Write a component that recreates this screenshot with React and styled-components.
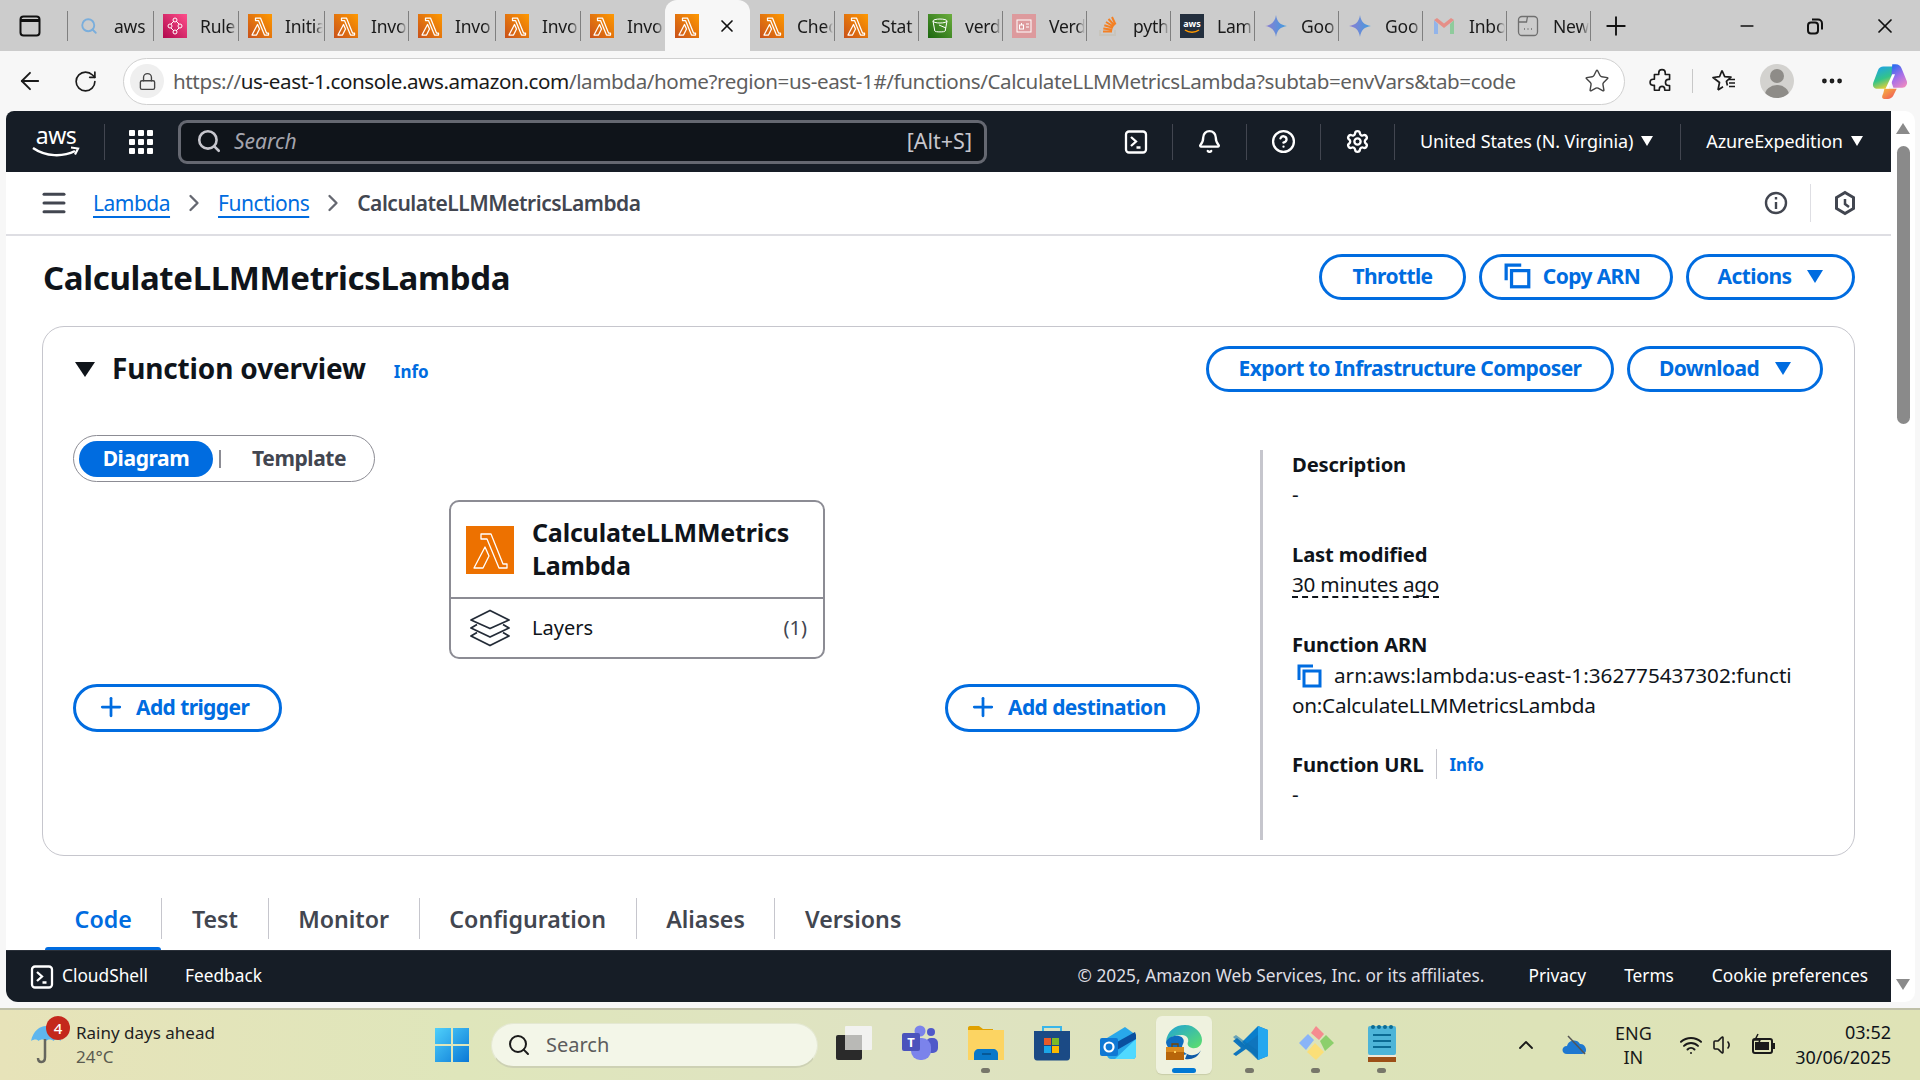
import React from 'react';
import styled, { createGlobalStyle } from 'styled-components';
import { ArrowLeft, RotateCw, Lock, Star, Search, Bell, CircleHelp, Settings, Plus, X, Minus, Menu, ChevronRight, ChevronUp, Wifi, Volume1, Ellipsis } from 'lucide-react';

const GlobalStyle = createGlobalStyle`
    html, body {
        margin: 0;
        padding: 0;
        background: #f7f7f7;
        overflow: hidden;
    }
    * {
        box-sizing: border-box;
    }
    body {
        font-family: "Noto Sans", "Open Sans", sans-serif;
        color: #0f141a;
    }
`;

const Page = styled.div`
    display: flex;
    flex-direction: column;
    width: 1920px;
    height: 1080px;
    overflow: hidden;
`;

/* browser chrome */

const TabStrip = styled.div`
    display: flex;
    align-items: stretch;
    flex: 0 0 51px;
    background: #cccccc;
`;

const WindowButton = styled.div`
    display: flex;
    align-items: center;
    flex: 0 0 67px;
    padding-left: 18px;
`;

const Tab = styled.div`
    position: relative;
    display: flex;
    align-items: center;
    flex: 0 0 ${(p) => p.$width || 84}px;
    min-width: 0;
    padding-left: 10px;
    background: ${(p) => (p.$active ? '#f7f7f7' : 'transparent')};
    border-radius: ${(p) => (p.$active ? '12px 12px 0 0' : '0')};
    &::before {
        content: '';
        display: ${(p) => (p.$active || p.$noLine ? 'none' : 'block')};
        position: absolute;
        left: 0;
        top: 11px;
        bottom: 10px;
        width: 1px;
        background: #7f7f7f;
    }
`;

const FaviconBox = styled.span`
    display: flex;
    flex: 0 0 24px;
    width: 24px;
    height: 24px;
    align-items: center;
    justify-content: center;
`;

const TabLabel = styled.span`
    flex: 1;
    min-width: 0;
    margin: 0 1px 0 13px;
    overflow: hidden;
    white-space: nowrap;
    font-size: 17.5px;
    letter-spacing: -0.2px;
    color: #1a1a1a;
    -webkit-mask-image: linear-gradient(90deg, #000 78%, transparent 100%);
    mask-image: linear-gradient(90deg, #000 78%, transparent 100%);
`;

const TabClose = styled.span`
    display: flex;
    margin-left: 18px;
`;

const NewTab = styled.div`
    display: flex;
    align-items: center;
    margin-left: 0;
    padding-left: 11px;
    position: relative;
    &::before {
        content: '';
        position: absolute;
        left: 0;
        top: 11px;
        bottom: 10px;
        width: 1px;
        background: #7f7f7f;
    }
`;

const WindowControls = styled.div`
    display: flex;
    align-items: center;
    margin-left: auto;
    padding-right: 23px;
    gap: 49px;
`;

const AddressRow = styled.div`
    display: flex;
    align-items: center;
    flex: 0 0 60px;
    padding-left: 16px;
    background: #f7f7f7;
`;

const NavIcon = styled.span`
    display: flex;
    align-items: center;
    justify-content: center;
    flex: 0 0 ${(p) => p.$w || 28}px;
    margin-right: ${(p) => p.$mr || 0}px;
    margin-left: ${(p) => p.$ml || 0}px;
    color: #1b1b1b;
`;

const UrlPill = styled.div`
    display: flex;
    align-items: center;
    flex: 0 0 1502px;
    height: 47px;
    padding-left: 6px;
    background: #ffffff;
    border: 1px solid #d0d0d0;
    border-radius: 24px;
`;

const LockCircle = styled.span`
    display: flex;
    align-items: center;
    justify-content: center;
    flex: 0 0 34px;
    height: 34px;
    border-radius: 50%;
    background: #efefef;
    color: #444;
`;

const UrlText = styled.div`
    flex: 1;
    margin-left: 9px;
    font-size: 20.6px;
    color: #5f5f5f;
    white-space: nowrap;
    letter-spacing: -0.4px;
    & b {
        font-weight: 400;
        color: #1a1a1a;
    }
`;

const ToolSeparator = styled.span`
    width: 1px;
    height: 24px;
    background: #c8c8c8;
    margin: 0 ${(p) => p.$mx || 14}px;
`;

const Avatar = styled.span`
    position: relative;
    display: block;
    width: 34px;
    height: 34px;
    border-radius: 50%;
    background: #d3d2cf;
    overflow: hidden;
    &::before {
        content: '';
        position: absolute;
        left: 10px;
        top: 5px;
        width: 14px;
        height: 14px;
        border-radius: 50%;
        background: #8e8c88;
    }
    &::after {
        content: '';
        position: absolute;
        left: 5px;
        top: 21px;
        width: 24px;
        height: 20px;
        border-radius: 50%;
        background: #8e8c88;
    }
`;

/* console frame */

const Viewport = styled.div`
    flex: 0 0 897px;
    display: flex;
    padding: 0 5px 6px 6px;
    background: #f7f7f7;
`;

const ConsoleFrame = styled.div`
    display: flex;
    flex-direction: column;
    flex: 0 0 1885px;
    background: #ffffff;
    border-radius: 8px 0 0 12px;
    overflow: hidden;
`;

const ScrollTrack = styled.div`
    display: flex;
    flex-direction: column;
    align-items: center;
    flex: 0 0 24px;
    padding: 12px 0 12px;
    background: #ffffff;
    border-radius: 0 10px 10px 0;
`;

const ScrollArrow = styled.span`
    width: 0;
    height: 0;
    border-left: 7px solid transparent;
    border-right: 7px solid transparent;
    border-${(p) => (p.$down ? 'top' : 'bottom')}: 11px solid #8a8a8a;
`;

const ScrollThumb = styled.div`
    width: 13px;
    height: 278px;
    margin-top: 12px;
    margin-bottom: auto;
    background: #8a8a8a;
    border-radius: 7px;
`;

const TopNav = styled.header`
    display: flex;
    align-items: center;
    flex: 0 0 61px;
    padding-left: 26px;
    background: #161d26;
    color: #ffffff;
`;

const NavDivider = styled.span`
    width: 1px;
    height: 36px;
    background: #424650;
    margin-left: 24px;
`;

const ServicesGrid = styled.div`
    display: grid;
    grid-template-columns: repeat(3, 6px);
    grid-auto-rows: 6px;
    gap: 3px;
    margin: 0 25px 0 24px;
    & span {
        background: #ffffff;
        border-radius: 1px;
    }
`;

const SearchBox = styled.div`
    display: flex;
    align-items: center;
    flex: 0 0 809px;
    height: 44px;
    padding: 0 12px 2px 15px;
    background: #0f141a;
    border: 3px solid #656871;
    border-radius: 9px;
    color: #c6c6cd;
`;

const SearchHint = styled.span`
    margin-left: 12px;
    font-size: 21px;
    font-style: italic;
    color: #a4a4ad;
`;

const SearchKey = styled.span`
    margin-left: auto;
    font-size: 21.5px;
    color: #c6c6cd;
`;

const NavIconCell = styled.span`
    display: flex;
    align-items: center;
    justify-content: center;
    flex: 0 0 74px;
    margin-left: ${(p) => p.$ml || 0}px;
    color: #ffffff;
    border-right: 1px solid #424650;
    height: 36px;
`;

const NavMenu = styled.span`
    display: flex;
    align-items: center;
    height: 36px;
    padding: 0 ${(p) => p.$pr || 20}px 2px 25px;
    font-size: 18px;
    letter-spacing: -0.1px;
    color: #ffffff;
    white-space: nowrap;
    border-right: ${(p) => (p.$line ? '1px solid #424650' : 'none')};
`;

const NavCaret = styled.span`
    width: 0;
    height: 0;
    margin-left: 8px;
    border-left: 6px solid transparent;
    border-right: 6px solid transparent;
    border-top: 10px solid #ffffff;
`;

const Breadcrumbs = styled.nav`
    display: flex;
    align-items: center;
    flex: 0 0 64px;
    padding-left: 33px;
    border-bottom: 2px solid #dedee3;
    font-size: 21px;
    letter-spacing: -0.5px;
`;

const CrumbLink = styled.a`
    margin-left: ${(p) => p.$ml || 0}px;
    color: #006ce0;
    text-decoration: underline;
    text-underline-offset: 5px;
    text-decoration-thickness: 2px;
`;

const CrumbArrow = styled.span`
    display: flex;
    margin: 0 10px;
    color: #656871;
`;

const CrumbCurrent = styled.span`
    font-weight: 600;
    color: #424650;
`;

const BreadcrumbTools = styled.div`
    display: flex;
    align-items: center;
    margin-left: auto;
    padding-right: 35px;
    color: #424650;
`;

const ToolDivider = styled.span`
    width: 1px;
    height: 38px;
    background: #dedee3;
    margin: 0 23px 0 22px;
`;

const Content = styled.main`
    flex: 1;
    min-height: 0;
    padding: 0 36px;
    overflow: hidden;
`;

const PageHeader = styled.div`
    display: flex;
    align-items: center;
    justify-content: space-between;
    height: 90px;
    padding-bottom: 8px;
`;

const Title = styled.h1`
    margin: 0 0 0 1px;
    font-size: 33px;
    font-weight: 700;
    letter-spacing: -0.36px;
    color: #0f141a;
`;

const ButtonRow = styled.div`
    display: flex;
    gap: 13px;
    margin-left: ${(p) => (p.$push ? 'auto' : '0')};
`;

const OutlineButton = styled.button`
    display: flex;
    align-items: center;
    justify-content: ${(p) => (p.$start ? 'flex-start' : 'center')};
    gap: ${(p) => p.$gap || 10}px;
    width: ${(p) => p.$w}px;
    height: ${(p) => p.$h || 46}px;
    padding: 0 ${(p) => p.$pr || 0}px 2px ${(p) => (p.$start ? 20 : 0)}px;
    background: #ffffff;
    border: 3px solid #006ce0;
    border-radius: 24px;
    color: #006ce0;
    font-family: inherit;
    font-size: 21px;
    font-weight: 700;
    letter-spacing: -0.6px;
`;

const BlueCaret = styled.span`
    width: 0;
    height: 0;
    margin-left: 6px;
    border-left: 8px solid transparent;
    border-right: 8px solid transparent;
    border-top: 13px solid #006ce0;
`;

const Card = styled.section`
    height: 530px;
    padding: 19px 31px 0 30px;
    border: 1px solid #c6c6cd;
    border-radius: 22px;
`;

const CardHead = styled.div`
    display: flex;
    align-items: center;
`;

const CollapseCaret = styled.span`
    width: 0;
    height: 0;
    margin-left: 2px;
    border-left: 10px solid transparent;
    border-right: 10px solid transparent;
    border-top: 15px solid #0f141a;
`;

const CardTitle = styled.h2`
    margin: 0 0 2px 17px;
    font-size: 28px;
    font-weight: 700;
    letter-spacing: -0.15px;
    color: #0f141a;
`;

const InfoLink = styled.a`
    color: #006ce0;
    font-size: 17px;
    font-weight: 700;
    margin-left: ${(p) => p.$ml || 0}px;
    padding-top: ${(p) => p.$drop || 0}px;
`;

const CardBody = styled.div`
    display: flex;
    align-items: flex-start;
`;

const DiagramColumn = styled.div`
    flex: 0 0 1127px;
    padding-top: 43px;
`;

const Segmented = styled.div`
    display: flex;
    align-items: center;
    width: 302px;
    height: 47px;
    padding-left: 5px;
    border: 1px solid #8c8c94;
    border-radius: 24px;
`;

const SegmentActive = styled.span`
    display: flex;
    align-items: center;
    justify-content: center;
    width: 134px;
    height: 36px;
    padding-bottom: 2px;
    background: #006ce0;
    border-radius: 18px;
    color: #ffffff;
    font-size: 21px;
    font-weight: 700;
    letter-spacing: -0.4px;
`;

const SegmentLine = styled.span`
    width: 2px;
    height: 18px;
    margin-left: 6px;
    background: #8c8c94;
`;

const SegmentItem = styled.span`
    margin: 0 0 2px 31px;
    color: #424650;
    font-size: 21px;
    font-weight: 700;
    letter-spacing: -0.4px;
`;

const FunctionBox = styled.div`
    width: 376px;
    height: 159px;
    margin: 18px 0 0 376px;
    border: 2px solid #8c8c94;
    border-radius: 10px;
`;

const FunctionHead = styled.div`
    display: flex;
    align-items: center;
    height: 97px;
    padding-left: 15px;
    border-bottom: 2px solid #8c8c94;
`;

const FunctionName = styled.div`
    margin: 0 0 2px 18px;
    font-size: 25px;
    line-height: 33px;
    font-weight: 700;
    letter-spacing: -0.2px;
    color: #0f141a;
`;

const LayerRow = styled.div`
    display: flex;
    align-items: center;
    height: 58px;
    padding: 0 16px 0 18px;
    font-size: 20px;
    color: #0f141a;
`;

const LayerName = styled.span`
    margin: 0 0 2px 21px;
`;

const LayerCount = styled.span`
    margin: 0 0 2px auto;
    color: #424650;
`;

const DiagramActions = styled.div`
    display: flex;
    justify-content: space-between;
    margin-top: 25px;
`;

const DetailColumn = styled.aside`
    flex: 1;
    height: 390px;
    margin: 58px 0 0 60px;
    padding-left: 29px;
    border-left: 3px solid #c6c6cd;
`;

const FieldLabel = styled.div`
    display: flex;
    align-items: center;
    height: 30px;
    padding-bottom: 2px;
    font-size: 20.2px;
    font-weight: 700;
    letter-spacing: -0.15px;
    color: #0f141a;
`;

const FieldValue = styled.div`
    height: 30px;
    line-height: 28px;
    margin-bottom: ${(p) => p.$mb ?? 30}px;
    font-size: 20.7px;
    letter-spacing: -0.25px;
    color: #0f141a;
    white-space: nowrap;
`;

const DottedValue = styled.span`
    text-decoration: underline dashed #0f141a;
    text-decoration-thickness: 1.5px;
    text-underline-offset: 4px;
    text-decoration-skip-ink: none;
`;

const ArnLine = styled.div`
    display: flex;
    align-items: center;
    height: 31px;
    padding-bottom: 2px;
    font-size: 20.7px;
    color: #0f141a;
    white-space: nowrap;
`;

const ArnCopy = styled.span`
    display: flex;
    margin: 2px 11px 0 5px;
`;

const LabelDivider = styled.span`
    width: 1px;
    height: 30px;
    background: #c6c6cd;
    margin: 0 13px 0 12px;
`;

const TabBar = styled.div`
    display: flex;
    align-items: stretch;
    height: 94px;
    padding-top: 42px;
    margin-left: 3px;
`;

const PageTab = styled.div`
    display: flex;
    align-items: center;
    position: relative;
    padding: 0 29.6px;
    height: 41px;
    font-size: 23.2px;
    font-weight: 600;
    color: ${(p) => (p.$active ? '#006ce0' : '#424650')};
    border-right: ${(p) => (p.$last ? 'none' : '1px solid #c6c6cd')};
    &::after {
        content: '';
        display: ${(p) => (p.$active ? 'block' : 'none')};
        position: absolute;
        left: 0;
        right: 0;
        top: 49px;
        height: 3px;
        background: #006ce0;
        border-radius: 3px 3px 0 0;
    }
`;

const Footer = styled.footer`
    display: flex;
    align-items: center;
    flex: 0 0 52px;
    padding: 0 23px 2px 24px;
    background: #161d26;
    border-top: 1px solid #2a3039;
    font-size: 17.3px;
    color: #ffffff;
`;

const FooterShell = styled.span`
    display: flex;
    margin: 2px 8px 0 0;
`;

const FooterLink = styled.span`
    margin-left: ${(p) => (p.$push ? 'auto' : `${p.$ml || 0}px`)};
    color: ${(p) => (p.$dim ? '#dedee3' : '#ffffff')};
    white-space: nowrap;
`;

/* windows taskbar */

const Taskbar = styled.div`
    display: flex;
    align-items: center;
    flex: 0 0 72px;
    background: linear-gradient(90deg, #e7e3b9 0%, #dfe6bb 24%, #dfe3c2 46%, #dce3b9 70%, #dfe3b6 100%);
    border-top: 2px solid #bfc0a8;
`;

const Weather = styled.div`
    position: relative;
    display: flex;
    align-items: center;
    flex: 0 0 434px;
    padding-left: 30px;
`;

const WeatherBadge = styled.span`
    position: absolute;
    left: 46px;
    top: -5px;
    display: flex;
    align-items: center;
    justify-content: center;
    width: 24px;
    height: 24px;
    border-radius: 50%;
    background: #c4281c;
    color: #ffffff;
    font-size: 15px;
    font-weight: 500;
`;

const WeatherText = styled.div`
    margin-left: 14px;
    font-size: 17px;
    line-height: 24px;
    color: #1f1f1f;
    & small {
        display: block;
        font-size: 17px;
        color: #5a5a50;
    }
`;

const StartButton = styled.span`
    display: flex;
    flex: 0 0 57px;
`;

const TaskSearch = styled.div`
    display: flex;
    align-items: center;
    flex: 0 0 327px;
    height: 45px;
    padding-left: 15px;
    background: #f3f6e8;
    border: 1px solid #e4e8d2;
    border-bottom: 2px solid #cdd1b4;
    border-radius: 23px;
    font-size: 20px;
    color: #5c5c5c;
    & span {
        margin-left: 15px;
    }
`;

const TaskSlots = styled.div`
    display: flex;
    margin-left: 3px;
`;

const TaskSlot = styled.div`
    position: relative;
    display: flex;
    align-items: center;
    justify-content: center;
    flex: 0 0 66px;
    height: 70px;
    &::before {
        content: '';
        display: ${(p) => (p.$active ? 'block' : 'none')};
        position: absolute;
        left: 5px;
        right: 5px;
        top: 6px;
        bottom: 6px;
        background: #eff2df;
        border-radius: 6px;
        box-shadow: 0 1px 1px #c8cca8;
    }
    &::after {
        content: '';
        display: ${(p) => (p.$active || p.$open ? 'block' : 'none')};
        position: absolute;
        left: ${(p) => (p.$active ? 21 : 28)}px;
        width: ${(p) => (p.$active ? 24 : 9)}px;
        top: 58px;
        height: 5px;
        border-radius: 3px;
        background: ${(p) => (p.$active ? '#0078d4' : '#77776a')};
    }
    & svg {
        position: relative;
        z-index: 1;
        margin-top: -4px;
    }
`;

const Tray = styled.div`
    display: flex;
    align-items: center;
    margin-left: 99px;
    color: #1a1a1a;
`;

const TrayIcon = styled.span`
    display: flex;
    margin-right: ${(p) => p.$mr || 0}px;
`;

const LangBlock = styled.div`
    margin-right: 27px;
    text-align: center;
    font-size: 18px;
    line-height: 24px;
`;

const Clock = styled.div`
    margin-left: auto;
    padding-right: 29px;
    text-align: right;
    white-space: nowrap;
    font-size: 18px;
    line-height: 25px;
`;

/* icons */

const LambdaGlyph = ({ width }) => (
    <path d="M15 8h10l12 30h4v4h-8L21 13h-6zM19 21l4 9-6 12H8z" fill="none" stroke="#fff" strokeWidth={width} strokeLinejoin="round" />
);

const LambdaFavicon = () => (
    <svg width="24" height="24" viewBox="0 0 48 48">
        <defs>
            <linearGradient id="lf" x1="0" y1="1" x2="1" y2="0">
                <stop offset="0" stopColor="#c8511b" />
                <stop offset="1" stopColor="#ff9900" />
            </linearGradient>
        </defs>
        <rect width="48" height="48" fill="url(#lf)" />
        <LambdaGlyph width={2.5} />
    </svg>
);

const LambdaTile = () => (
    <svg width="48" height="48" viewBox="0 0 48 48">
        <rect width="48" height="48" fill="#ed7100" />
        <LambdaGlyph width={1.3} />
    </svg>
);

const RuleFavicon = () => (
    <svg width="24" height="24" viewBox="0 0 24 24">
        <defs>
            <linearGradient id="rf" x1="0" y1="1" x2="1" y2="0">
                <stop offset="0" stopColor="#b0084d" />
                <stop offset="1" stopColor="#ff4f8b" />
            </linearGradient>
        </defs>
        <rect width="24" height="24" fill="url(#rf)" />
        <g fill="none" stroke="#fff" strokeWidth="1">
            <circle cx="12" cy="6" r="2" />
            <circle cx="7" cy="12" r="2" />
            <circle cx="17" cy="12" r="2" />
            <circle cx="12" cy="18" r="2" />
            <path d="M8 10l3-3M13 7l3 3M8 14l3 3M16 14l-3 3" />
        </g>
    </svg>
);

const BucketFavicon = () => (
    <svg width="24" height="24" viewBox="0 0 24 24">
        <defs>
            <linearGradient id="bf" x1="0" y1="1" x2="1" y2="0">
                <stop offset="0" stopColor="#1b660f" />
                <stop offset="1" stopColor="#6cae3e" />
            </linearGradient>
        </defs>
        <rect width="24" height="24" fill="url(#bf)" />
        <ellipse cx="12" cy="7" rx="7" ry="2" fill="none" stroke="#fff" />
        <path d="M5 7l1.800 10c.2 1.200 10.200 1.200 10.400 0L19 7M11 11l7 3" fill="none" stroke="#fff" />
    </svg>
);

const VercelFavicon = () => (
    <svg width="24" height="24" viewBox="0 0 24 24">
        <rect width="24" height="24" fill="#dd9a9d" />
        <rect x="5" y="6" width="14" height="12" fill="none" stroke="#fff" />
        <rect x="7.500" y="11" width="4" height="4" fill="none" stroke="#fff" />
        <path d="M9.500 11V9M14 10h3M14 13h3" stroke="#fff" />
    </svg>
);

const StackFavicon = () => (
    <svg width="24" height="24" viewBox="0 0 24 24">
        <path d="M4 16v5h15v-5" fill="none" stroke="#c8c5bd" strokeWidth="2" />
        <path d="M7 17.500h9M7.300 14.500l9 1.200M8.300 11.200l8.600 2.700M10 8l7.600 4.600M12.500 5l6 6.500M16 3l3.500 7.500" stroke="#f48024" strokeWidth="2" />
    </svg>
);

const AwsFavicon = () => (
    <svg width="24" height="24" viewBox="0 0 24 24">
        <rect width="24" height="24" fill="#232f3e" />
        <text x="12" y="13" textAnchor="middle" fontFamily="Noto Sans, sans-serif" fontSize="9" fontWeight="700" fill="#fff">aws</text>
        <path d="M5 16c4 3 10 3 14 0" fill="none" stroke="#ff9900" strokeWidth="1.500" />
    </svg>
);

const GeminiFavicon = ({ id }) => (
    <svg width="24" height="24" viewBox="0 0 24 24">
        <defs>
            <linearGradient id={id} x1="0" y1="0" x2="1" y2="0">
                <stop offset="0" stopColor="#8f7cd1" />
                <stop offset="1" stopColor="#3f9de0" />
            </linearGradient>
        </defs>
        <path d="M12 1c.8 6.500 4.500 10.200 11 11-6.500.8-10.200 4.500-11 11-.8-6.500-4.500-10.200-11-11 6.500-.8 10.200-4.500 11-11z" fill={`url(#${id})`} />
    </svg>
);

const GmailFavicon = () => (
    <svg width="24" height="24" viewBox="0 0 24 24">
        <path d="M2 6v14h4V10z" fill="#92b4ea" />
        <path d="M22 6v14h-4V10z" fill="#8fcb9c" />
        <path d="M2 6l10 8 10-8-3-2-7 5.500L5 4z" fill="#e58f88" />
    </svg>
);

const NewTabFavicon = () => (
    <svg width="24" height="24" viewBox="0 0 24 24" fill="none" stroke="#6f6f6f" strokeWidth="1.300">
        <rect x="2.500" y="2.500" width="19" height="19" rx="3.500" />
        <path d="M2.500 8h8l1-5.500" />
        <path d="M8 15h1M11.500 15h1M15 15h1" strokeWidth="1.600" />
    </svg>
);

const WindowIcon = () => (
    <svg width="24" height="24" viewBox="0 0 24 24" fill="none" stroke="#111" strokeWidth="2">
        <rect x="2.500" y="2.500" width="19" height="19" rx="3" />
        <path d="M2.500 6.500h19" strokeWidth="3" />
    </svg>
);

const RestoreIcon = () => (
    <svg width="18" height="18" viewBox="0 0 18 18" fill="none" stroke="#111" strokeWidth="2">
        <rect x="2" y="5.500" width="10" height="11" rx="3" />
        <path d="M6 2.500h6a4 4 0 0 1 4 4v6" />
    </svg>
);

const PuzzleIcon = () => (
    <svg width="26" height="26" viewBox="0 0 24 24" fill="none" stroke="#1b1b1b" strokeWidth="1.500" strokeLinejoin="round">
        <path d="M9 4.500a3 3 0 0 1 6 0V6h4v4.500h-1a2.800 2.800 0 0 0 0 5.600h1V20.500h-4.500v-1a2.500 2.500 0 0 0-5 0v1H5V16H3.800a2.800 2.800 0 0 1 0-5.600H5V6h4z" />
    </svg>
);

const FavoritesIcon = () => (
    <svg width="28" height="26" viewBox="0 0 28 26" fill="none" stroke="#1b1b1b" strokeWidth="1.700" strokeLinejoin="round">
        <path d="M12 2.500l2.700 6.200 6.300.5-4.600 4.100 1 4.200M8 22l1.500-7.500L3 9.500l6.500-.8L12 2.500M8 22l5-3.200" />
        <path d="M19 11.500h6M19 15h6M19 18.500h6" />
    </svg>
);

const CopilotIcon = () => (
    <svg width="38" height="38" viewBox="0 0 34 34">
        <defs>
            <linearGradient id="c1" x1="0.2" y1="0" x2="0.6" y2="1">
                <stop offset="0" stopColor="#1fa2e8" />
                <stop offset=".55" stopColor="#33c48a" />
                <stop offset="1" stopColor="#f6d02e" />
            </linearGradient>
            <linearGradient id="c2" x1="0.3" y1="0" x2="0.8" y2="1">
                <stop offset="0" stopColor="#2f6cf0" />
                <stop offset=".5" stopColor="#a86fe8" />
                <stop offset="1" stopColor="#ee8ac0" />
            </linearGradient>
            <linearGradient id="c3" x1="0" y1="0" x2="1" y2="1">
                <stop offset="0" stopColor="#f6b73c" />
                <stop offset="1" stopColor="#ef4e5c" />
            </linearGradient>
        </defs>
        <path d="M11 4h11l-6 20H6c-3 0-5-2-4-5.500L6 8c1-3 3-4 5-4z" fill="url(#c1)" />
        <path d="M19 2h3c3 0 4.500 1.500 5.500 4L32 17c1 3-1 6-4 6H20l-2-6z" fill="url(#c2)" />
        <path d="M12 24h11l-3 6c-1 2-3 3-5 3h-3c-3 0-2-3-1-5z" fill="url(#c3)" />
        <path d="M19 11h2.500L16 24h-3z" fill="#ffffff" />
    </svg>
);

const AwsLogo = () => (
    <svg width="48" height="46" viewBox="0 0 48 46">
        <text x="24" y="25" textAnchor="middle" fontFamily="Noto Sans, sans-serif" fontSize="23" letterSpacing="-0.500" fill="#ffffff">aws</text>
        <path d="M1 29c13 9 30 9 42 3" fill="none" stroke="#ffffff" strokeWidth="2.500" />
        <path d="M39 28.500l7 1-3 6" fill="none" stroke="#ffffff" strokeWidth="2.200" />
    </svg>
);

const ShellIcon = ({ size = 24 }) => (
    <svg width={size} height={size} viewBox="0 0 24 24" fill="none" stroke="#fff" strokeWidth="2.300">
        <rect x="2" y="1.500" width="20" height="21" rx="3" />
        <path d="M7 7l5 4.500-5 4.500" />
        <path d="M12.500 17.500h4" />
    </svg>
);

const HexIcon = () => (
    <svg width="22" height="26" viewBox="0 0 22 26" fill="none" stroke="#424650" strokeWidth="3">
        <path d="M11 2.500l8.500 5v11l-8.500 5-8.500-5v-11z" />
        <path d="M11 9v5l4 3" strokeWidth="2.500" />
    </svg>
);

const InfoCircle = () => (
    <svg width="24" height="24" viewBox="0 0 24 24" fill="none" stroke="#424650" strokeWidth="2.400">
        <circle cx="12" cy="12" r="10" />
        <path d="M12 11v7M12 6v2.500" />
    </svg>
);

const CopyIcon = ({ width = 26, height = 24 }) => (
    <svg width={width} height={height} viewBox="0 0 26 24" fill="none" stroke="#006ce0" strokeWidth="3">
        <path d="M2 16V2h14" />
        <rect x="7" y="7" width="16" height="15" />
    </svg>
);

const LayersIcon = () => (
    <svg width="42" height="38" viewBox="0 0 42 38" fill="none" stroke="#232b37" strokeWidth="1.800" strokeLinejoin="round">
        <path d="M21 1.500L40 11 21 19.500 2 11z" />
        <path d="M8 15.500L2 19l19 9 19-9-6-3.500" />
        <path d="M8 23.500L2 27l19 9.500L40 27l-6-3.500" />
    </svg>
);

const UmbrellaIcon = () => (
    <svg width="32" height="44" viewBox="0 0 32 44">
        <path d="M1 18C3 8 10 3 16 3s13 5 15 15c-3-2-6-2-7.500 0-2-2-5.500-2-7.500 0-2-2-5.500-2-7.500 0C7 16 4 16 1 18z" fill="#5fb6ee" />
        <path d="M15 16v18c0 3-1.500 5-3.500 5S8 37.500 8 35" fill="none" stroke="#66665e" strokeWidth="2.500" />
    </svg>
);

const WindowsLogo = () => (
    <svg width="36" height="36" viewBox="0 0 36 36">
        <defs>
            <linearGradient id="wl" x1="0" y1="0" x2="1" y2="1">
                <stop offset="0" stopColor="#4fd0fb" />
                <stop offset="1" stopColor="#0a78d6" />
            </linearGradient>
        </defs>
        <path d="M1 1h16v16H1zM19 1h16v16H19zM1 19h16v16H1zM19 19h16v16H19z" fill="url(#wl)" />
    </svg>
);

const TaskViewIcon = () => (
    <svg width="38" height="36" viewBox="0 0 38 36">
        <rect x="1" y="10" width="26" height="25" rx="2" fill="#2a2a2a" />
        <rect x="10" y="1" width="27" height="24" rx="1" fill="#f2f2f0" />
        <rect x="10" y="10" width="17" height="15" fill="#b9b9b6" />
    </svg>
);

const TeamsIcon = () => (
    <svg width="38" height="36" viewBox="0 0 38 36">
        <circle cx="30" cy="7" r="4" fill="#5059c9" />
        <rect x="25" y="13" width="12" height="15" rx="5" fill="#5059c9" />
        <circle cx="19" cy="6" r="5.500" fill="#7b83eb" />
        <rect x="10" y="13" width="20" height="22" rx="9" fill="#7b83eb" />
        <rect x="1" y="8" width="18" height="18" rx="2" fill="#4b53bc" />
        <text x="10" y="22" textAnchor="middle" fontFamily="Noto Sans, sans-serif" fontSize="13" fontWeight="700" fill="#fff">T</text>
    </svg>
);

const ExplorerIcon = () => (
    <svg width="36" height="34" viewBox="0 0 36 34">
        <path d="M0 2c0-1 .5-2 2-2h9l4 3h10v4H0z" fill="#e0a100" />
        <rect x="0" y="4" width="36" height="30" fill="#fcd462" />
        <path d="M6 34v-6c0-3 2-5 5-5h14c3 0 5 2 5 5v6z" fill="#0a78c8" />
        <path d="M14 28h9" stroke="#064e87" strokeWidth="1.500" />
    </svg>
);

const StoreIcon = () => (
    <svg width="36" height="36" viewBox="0 0 36 36">
        <path d="M9 6V2h18v4" fill="none" stroke="#39b6ea" strokeWidth="2" />
        <path d="M0 6h36v26c0 2-1 3.500-3 3.500H3c-2 0-3-1.500-3-3.500z" fill="#1b4a85" />
        <rect x="10" y="13" width="7" height="7" fill="#ea5a28" />
        <rect x="18" y="13" width="7" height="7" fill="#7db928" />
        <rect x="10" y="21" width="7" height="7" fill="#1ca6e8" />
        <rect x="18" y="21" width="7" height="7" fill="#fdb900" />
    </svg>
);

const OutlookIcon = () => (
    <svg width="38" height="34" viewBox="0 0 38 34">
        <path d="M8 12L26 1l11 8v20c0 2-1 4-3 4H12c-2 0-4-2-4-4z" fill="#28a8ea" />
        <path d="M37 9v20c0 2-1 4-3 4H16l21-20z" fill="#50d9ff" />
        <path d="M18 16l18-10 1 3v4L18 24z" fill="#0a4f9f" />
        <rect x="1" y="12" width="18" height="18" rx="2" fill="#0f78d4" />
        <circle cx="10" cy="21" r="4.500" fill="none" stroke="#fff" strokeWidth="2.200" />
    </svg>
);

const EdgeIcon = () => (
    <svg width="38" height="38" viewBox="0 0 38 38">
        <defs>
            <linearGradient id="eg" x1="0" y1="0" x2="1" y2="1">
                <stop offset="0" stopColor="#1fa2d8" />
                <stop offset="1" stopColor="#5fe06a" />
            </linearGradient>
        </defs>
        <path d="M1 18C2 7 10 1 20 1c10 0 17 8 17 15 0 6-5 9-10 8-4-1-5-4-4-6 1-3-1-7-6-7-8 0-14 3-16 7z" fill="url(#eg)" />
        <path d="M1 18c2-5 8-7 13-6 4 1 6 4 4 8-2 3-1 8 4 10-8 3-15 0-17-4-2-3-4-5-4-8z" fill="#0f6cbf" />
        <path d="M22 30c6 3 12 0 14-4-3 8-10 10-16 9z" fill="#0d5aa7" />
        <path d="M1 23h18v13H1z" fill="#b8660a" />
        <rect x="1" y="23" width="18" height="5" fill="#d98a1f" />
        <path d="M7 23v-3h6v3" fill="none" stroke="#7a4500" strokeWidth="1.300" />
        <rect x="9" y="27" width="2" height="2" fill="#ffd15c" />
    </svg>
);

const VsCodeIcon = () => (
    <svg width="36" height="36" viewBox="0 0 36 36">
        <path d="M26 1L10 17l16 18 10-4V5z" fill="#0a7ecb" />
        <path d="M26 1l10 4v26l-10 4z" fill="#24a7f0" />
        <path d="M26 10L13 20 5 13l-4 3 8 7-8 6 3 2 10-7 12 8z" fill="#0f75bd" />
        <path d="M1 12l3-2 22 16v9z" fill="#0b6fb3" opacity=".55" />
    </svg>
);

const GemIcon = () => (
    <svg width="38" height="38" viewBox="0 0 38 38">
        <path d="M14 9l5-7 8 8-5 6z" fill="#f58b8f" />
        <path d="M2 19l9-9 6 6-8 10z" fill="#8ab4f8" />
        <path d="M23 17l6-6 8 8-9 8z" fill="#8ccf6c" />
        <path d="M10 28l8-9 9 9-8 8z" fill="#fbdf78" />
    </svg>
);

const NotepadIcon = () => (
    <svg width="30" height="38" viewBox="0 0 30 38">
        <path d="M1 32h28v6H1z" fill="#9c4f17" />
        <path d="M1 31h28v2H1z" fill="#f0e8d8" />
        <rect x="1" y="2" width="28" height="29" rx="2" fill="#4db4d8" />
        <g fill="#0b6b94">
            <circle cx="6" cy="3" r="2" />
            <circle cx="12" cy="3" r="2" />
            <circle cx="18" cy="3" r="2" />
            <circle cx="24" cy="3" r="2" />
            <rect x="6" y="10" width="18" height="2" />
            <rect x="6" y="16" width="18" height="2" />
            <rect x="6" y="22" width="18" height="2" />
        </g>
    </svg>
);

const OneDriveIcon = () => (
    <svg width="26" height="20" viewBox="0 0 26 20">
        <path d="M5 19c-6 0-6-8 0-8 1-6 10-8 13-2 6-1 9 10 2 10z" fill="#1e78d0" />
        <path d="M6 1l17 18" stroke="#555" strokeWidth="1.500" />
    </svg>
);

const BatteryIcon = () => (
    <svg width="26" height="24" viewBox="0 0 26 24" fill="none" stroke="#1a1a1a" strokeWidth="2">
        <rect x="2" y="6" width="19" height="14" rx="2" />
        <rect x="4" y="9" width="14" height="8" fill="#1a1a1a" stroke="none" />
        <path d="M23 10v6" />
        <path d="M7 1L4 7h5l-2 5" strokeWidth="1.500" />
    </svg>
);

const tabs = [
    { icon: <Search size={18} color="#7aaedc" strokeWidth={2.500} />, label: 'aws', width: 86 },
    { icon: <RuleFavicon />, label: 'Rule', width: 85 },
    { icon: <LambdaFavicon />, label: 'Initia', width: 86 },
    { icon: <LambdaFavicon />, label: 'Invo', width: 84 },
    { icon: <LambdaFavicon />, label: 'Invo', width: 87 },
    { icon: <LambdaFavicon />, label: 'Invo', width: 85 },
    { icon: <LambdaFavicon />, label: 'Invo', width: 85 },
    { icon: <LambdaFavicon />, active: true, width: 85 },
    { icon: <LambdaFavicon />, label: 'Chec', noLine: true },
    { icon: <LambdaFavicon />, label: 'Stat' },
    { icon: <BucketFavicon />, label: 'verd' },
    { icon: <VercelFavicon />, label: 'Verd' },
    { icon: <StackFavicon />, label: 'pyth' },
    { icon: <AwsFavicon />, label: 'Lam' },
    { icon: <GeminiFavicon id="g1" />, label: 'Goo' },
    { icon: <GeminiFavicon id="g2" />, label: 'Goo' },
    { icon: <GmailFavicon />, label: 'Inbo' },
    { icon: <NewTabFavicon />, label: 'New' },
];

const pageTabs = ['Code', 'Test', 'Monitor', 'Configuration', 'Aliases', 'Versions'];

const App = () => {
    return (
        <Page>
            <GlobalStyle />

            <TabStrip>
                <WindowButton><WindowIcon /></WindowButton>
                {tabs.map((tab, i) => (
                    <Tab key={i} $active={tab.active} $width={tab.width} $noLine={tab.noLine}>
                        <FaviconBox>{tab.icon}</FaviconBox>
                        {tab.active
                            ? <TabClose><X size={20} color="#111" strokeWidth={2} /></TabClose>
                            : <TabLabel>{tab.label}</TabLabel>}
                    </Tab>
                ))}
                <NewTab><Plus size={30} color="#111" strokeWidth={1.500} /></NewTab>
                <WindowControls>
                    <Minus size={20} color="#111" strokeWidth={2} />
                    <RestoreIcon />
                    <X size={24} color="#111" strokeWidth={1.700} />
                </WindowControls>
            </TabStrip>

            <AddressRow>
                <NavIcon $w={26} $mr={28}><ArrowLeft size={28} strokeWidth={1.600} /></NavIcon>
                <NavIcon $w={26} $mr={25}><RotateCw size={25} strokeWidth={1.600} /></NavIcon>
                <UrlPill>
                    <LockCircle><Lock size={19} strokeWidth={1.700} /></LockCircle>
                    <UrlText>https://<b>us-east-1.console.aws.amazon.com</b>/lambda/home?region=us-east-1#/functions/CalculateLLMMetricsLambda?subtab=envVars&amp;tab=code</UrlText>
                    <NavIcon $w={26} $mr={14}><Star size={26} strokeWidth={1.300} color="#444" /></NavIcon>
                </UrlPill>
                <NavIcon $w={26} $ml={24}><PuzzleIcon /></NavIcon>
                <ToolSeparator $mx={17} />
                <NavIcon $w={28}><FavoritesIcon /></NavIcon>
                <NavIcon $w={34} $ml={22}><Avatar /></NavIcon>
                <NavIcon $w={24} $ml={25}><Ellipsis size={26} strokeWidth={2.400} /></NavIcon>
                <NavIcon $w={38} $ml={26}><CopilotIcon /></NavIcon>
            </AddressRow>

            <Viewport>
                <ConsoleFrame>
                    <TopNav>
                        <AwsLogo />
                        <NavDivider />
                        <ServicesGrid>
                            {Array.from({ length: 9 }).map((_, i) => <span key={i} />)}
                        </ServicesGrid>
                        <SearchBox>
                            <Search size={26} strokeWidth={2.400} />
                            <SearchHint>Search</SearchHint>
                            <SearchKey>[Alt+S]</SearchKey>
                        </SearchBox>
                        <NavIconCell $ml={112}><ShellIcon /></NavIconCell>
                        <NavIconCell><Bell size={25} strokeWidth={2.200} /></NavIconCell>
                        <NavIconCell><CircleHelp size={25} strokeWidth={2.200} /></NavIconCell>
                        <NavIconCell><Settings size={25} strokeWidth={2.200} /></NavIconCell>
                        <NavMenu $line $pr={27}>United States (N. Virginia)<NavCaret /></NavMenu>
                        <NavMenu>AzureExpedition<NavCaret /></NavMenu>
                    </TopNav>

                    <Breadcrumbs>
                        <Menu size={30} color="#424650" strokeWidth={2.400} />
                        <CrumbLink $ml={24}>Lambda</CrumbLink>
                        <CrumbArrow><ChevronRight size={28} strokeWidth={2} /></CrumbArrow>
                        <CrumbLink>Functions</CrumbLink>
                        <CrumbArrow><ChevronRight size={28} strokeWidth={2} /></CrumbArrow>
                        <CrumbCurrent>CalculateLLMMetricsLambda</CrumbCurrent>
                        <BreadcrumbTools>
                            <InfoCircle />
                            <ToolDivider />
                            <HexIcon />
                        </BreadcrumbTools>
                    </Breadcrumbs>

                    <Content>
                        <PageHeader>
                            <Title>CalculateLLMMetricsLambda</Title>
                            <ButtonRow>
                                <OutlineButton $w={147}>Throttle</OutlineButton>
                                <OutlineButton $w={194} $pr={8} $gap={11}><CopyIcon width={28} height={26} />Copy ARN</OutlineButton>
                                <OutlineButton $w={169}>Actions<BlueCaret /></OutlineButton>
                            </ButtonRow>
                        </PageHeader>

                        <Card>
                            <CardHead>
                                <CollapseCaret />
                                <CardTitle>Function overview</CardTitle>
                                <InfoLink $ml={28} $drop={4}>Info</InfoLink>
                                <ButtonRow $push>
                                    <OutlineButton $w={408}>Export to Infrastructure Composer</OutlineButton>
                                    <OutlineButton $w={196}>Download<BlueCaret /></OutlineButton>
                                </ButtonRow>
                            </CardHead>
                            <CardBody>
                                <DiagramColumn>
                                    <Segmented>
                                        <SegmentActive>Diagram</SegmentActive>
                                        <SegmentLine />
                                        <SegmentItem>Template</SegmentItem>
                                    </Segmented>
                                    <FunctionBox>
                                        <FunctionHead>
                                            <LambdaTile />
                                            <FunctionName>CalculateLLMMetrics<br />Lambda</FunctionName>
                                        </FunctionHead>
                                        <LayerRow>
                                            <LayersIcon />
                                            <LayerName>Layers</LayerName>
                                            <LayerCount>(1)</LayerCount>
                                        </LayerRow>
                                    </FunctionBox>
                                    <DiagramActions>
                                        <OutlineButton $w={209} $h={48} $start><Plus size={30} strokeWidth={2.200} />Add trigger</OutlineButton>
                                        <OutlineButton $w={255} $h={48} $start><Plus size={30} strokeWidth={2.200} />Add destination</OutlineButton>
                                    </DiagramActions>
                                </DiagramColumn>
                                <DetailColumn>
                                    <FieldLabel>Description</FieldLabel>
                                    <FieldValue>-</FieldValue>
                                    <FieldLabel>Last modified</FieldLabel>
                                    <FieldValue><DottedValue>30 minutes ago</DottedValue></FieldValue>
                                    <FieldLabel>Function ARN</FieldLabel>
                                    <ArnLine><ArnCopy><CopyIcon /></ArnCopy>arn:aws:lambda:us-east-1:362775437302:functi</ArnLine>
                                    <FieldValue $mb={29}>on:CalculateLLMMetricsLambda</FieldValue>
                                    <FieldLabel>Function URL<LabelDivider /><InfoLink>Info</InfoLink></FieldLabel>
                                    <FieldValue>-</FieldValue>
                                </DetailColumn>
                            </CardBody>
                        </Card>

                        <TabBar>
                            {pageTabs.map((name, i) => (
                                <PageTab key={name} $active={i === 0} $last={i === pageTabs.length - 1}>{name}</PageTab>
                            ))}
                        </TabBar>
                    </Content>

                    <Footer>
                        <FooterShell><ShellIcon size={24} /></FooterShell>
                        <FooterLink>CloudShell</FooterLink>
                        <FooterLink $ml={37}>Feedback</FooterLink>
                        <FooterLink $dim $push>© 2025, Amazon Web Services, Inc. or its affiliates.</FooterLink>
                        <FooterLink $ml={44}>Privacy</FooterLink>
                        <FooterLink $ml={38}>Terms</FooterLink>
                        <FooterLink $ml={38}>Cookie preferences</FooterLink>
                    </Footer>
                </ConsoleFrame>

                <ScrollTrack>
                    <ScrollArrow />
                    <ScrollThumb />
                    <ScrollArrow $down />
                </ScrollTrack>
            </Viewport>

            <Taskbar>
                <Weather>
                    <UmbrellaIcon />
                    <WeatherBadge>4</WeatherBadge>
                    <WeatherText>
                        Rainy days ahead
                        <small>24°C</small>
                    </WeatherText>
                </Weather>
                <StartButton><WindowsLogo /></StartButton>
                <TaskSearch>
                    <Search size={24} color="#1a1a1a" strokeWidth={2} />
                    <span>Search</span>
                </TaskSearch>
                <TaskSlots>
                    <TaskSlot><TaskViewIcon /></TaskSlot>
                    <TaskSlot><TeamsIcon /></TaskSlot>
                    <TaskSlot $open><ExplorerIcon /></TaskSlot>
                    <TaskSlot><StoreIcon /></TaskSlot>
                    <TaskSlot><OutlookIcon /></TaskSlot>
                    <TaskSlot $active><EdgeIcon /></TaskSlot>
                    <TaskSlot $open><VsCodeIcon /></TaskSlot>
                    <TaskSlot $open><GemIcon /></TaskSlot>
                    <TaskSlot $open><NotepadIcon /></TaskSlot>
                </TaskSlots>
                <Tray>
                    <TrayIcon $mr={24}><ChevronUp size={24} strokeWidth={1.800} /></TrayIcon>
                    <TrayIcon $mr={27}><OneDriveIcon /></TrayIcon>
                    <LangBlock>ENG<br />IN</LangBlock>
                    <TrayIcon $mr={9}><Wifi size={24} strokeWidth={2} /></TrayIcon>
                    <TrayIcon $mr={15}><Volume1 size={24} strokeWidth={1.600} /></TrayIcon>
                    <TrayIcon><BatteryIcon /></TrayIcon>
                </Tray>
                <Clock>03:52<br />30/06/2025</Clock>
            </Taskbar>
        </Page>
    );
};

export default App;
